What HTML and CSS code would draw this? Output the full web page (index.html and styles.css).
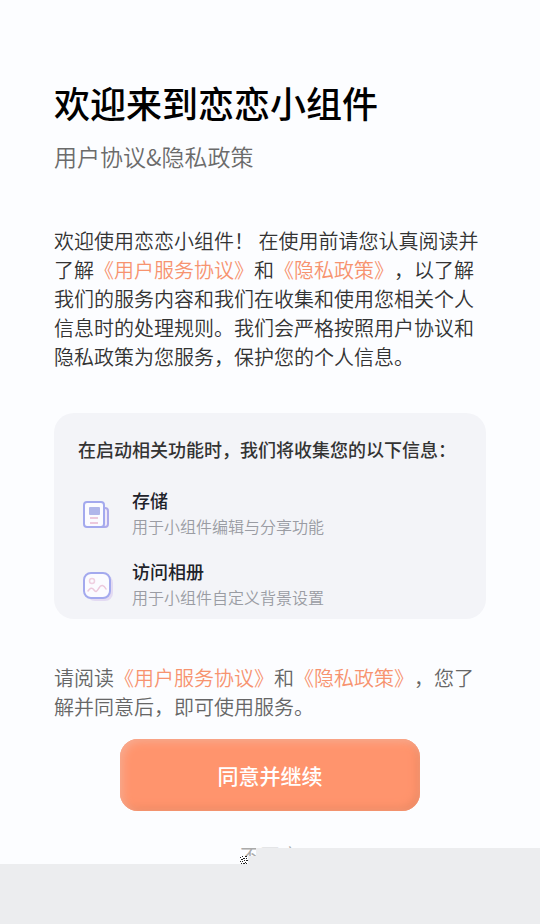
FILE: index.html
```html
<!DOCTYPE html>
<html lang="zh-CN">
<head>
<meta charset="utf-8">
<meta name="viewport" content="width=device-width, initial-scale=1">
<title>用户协议&amp;隐私政策</title>
<link rel="stylesheet" href="styles.css">
</head>
<body>
<main class="page">
  <h1 class="title">欢迎来到恋恋小组件</h1>
  <p class="subtitle">用户协议&amp;隐私政策</p>
  <p class="intro">欢迎使用恋恋小组件！ 在使用前请您认真阅读并了解<a class="link" href="#service">《用户服务协议》</a>和<a class="link" href="#privacy">《隐私政策》</a>，以了解我们的服务内容和我们在收集和使用您相关个人信息时的处理规则。我们会严格按照用户协议和隐私政策为您服务，保护您的个人信息。</p>
  <section class="card">
    <h2 class="card-title">在启动相关功能时，我们将收集您的以下信息：</h2>
    <ul class="list">
      <li class="item">
        <svg class="icon" viewBox="0 0 36 36" aria-hidden="true">
          <path d="M25 13h2a3 3 0 0 1 3 3v13a3 3 0 0 1-3 3h-5" fill="#f0e9f8" stroke="#aeaaea" stroke-width="2"/>
          <rect x="6" y="7" width="20" height="25" rx="3" fill="#fbfbff" stroke="#a3a9ee" stroke-width="2"/>
          <rect x="11" y="12" width="11" height="8" rx="1" fill="#b0b6ea"/>
          <path d="M12 23h8M12 28h8" stroke="#ecc8dc" stroke-width="2"/>
        </svg>
        <div class="item-text">
          <h3 class="item-title">存储</h3>
          <p class="item-desc">用于小组件编辑与分享功能</p>
        </div>
      </li>
      <li class="item">
        <svg class="icon" viewBox="0 0 36 36" aria-hidden="true">
          <rect x="9" y="9" width="26" height="26" rx="8" fill="#e3daf2"/>
          <rect x="6" y="7" width="26" height="25" rx="7" fill="#fbfbff" stroke="#a3a9ee" stroke-width="2"/>
          <circle cx="14" cy="15" r="2.500" fill="none" stroke="#efcfe0" stroke-width="1.500"/>
          <path d="M10 25c2-3 4-4 6-1s3 1 5-2c2-4 5-3 7 1" fill="none" stroke="#ecc8dc" stroke-width="1.500" stroke-linecap="round"/>
        </svg>
        <div class="item-text">
          <h3 class="item-title">访问相册</h3>
          <p class="item-desc">用于小组件自定义背景设置</p>
        </div>
      </li>
    </ul>
  </section>
  <p class="notice">请阅读<a class="link" href="#service">《用户服务协议》</a>和<a class="link" href="#privacy">《隐私政策》</a>，您了解并同意后，即可使用服务。</p>
  <button class="accept" type="button">同意并继续</button>
  <button class="decline" type="button">不同意</button>
</main>
<div class="cover" aria-hidden="true">
  <div class="cover-left"></div>
  <svg class="cover-edge" viewBox="0 0 16 76">
    <path d="M8 8h8v68H0V16h8z" fill="#ecedef"/>
    <path d="M0 8h8v8H0z" fill="#fff"/>
    <path d="M2 8h1v1H2zM5 8h2v1H5zM0 9h1v1H0zM3 10h2v1H3zM6 10h1v1H6zM1 11h2v1H1zM4 12h1v1H4zM6 12h2v1H6zM0 13h1v1H0zM2 13h1v1H2zM5 14h1v1H5zM1 15h1v1H1zM3 15h2v1H3zM6 15h1v1H6z" fill="#222"/>
  </svg>
  <div class="cover-right"></div>
</div>
</body>
</html>
```

FILE: styles.css
```css
* {
  box-sizing: border-box;
  margin: 0;
  padding: 0;
}

body {
  position: relative;
  min-height: 100vh;
  background: #fcfdff;
  color: #333;
  font-family: "Noto Sans CJK SC", sans-serif;
  font-weight: 350;
  text-spacing-trim: space-all;
}

.page {
  display: flex;
  flex-direction: column;
  padding: 76px 10% 0;
}

.title {
  color: #000;
  font-size: 36px;
  font-weight: 500;
  line-height: 52px;
}

.subtitle {
  margin-top: 12px;
  color: #6b6b6b;
  font-size: 23px;
  line-height: 32px;
}

.intro,
.notice {
  font-size: 20px;
  line-height: 29px;
}

.intro {
  margin-top: 54px;
}

.notice {
  margin-top: 44px;
  color: #666;
}

.link {
  color: #f7936f;
  text-decoration: none;
}

.card {
  margin-top: 42px;
  padding: 23px 24px 9px;
  border-radius: 20px;
  background: #f3f4f8;
}

.card-title {
  font-size: 18px;
  font-weight: 500;
  line-height: 26px;
}

.list {
  display: grid;
  gap: 19px;
  margin-top: 25px;
  list-style: none;
}

.item {
  display: flex;
  align-items: center;
  gap: 18px;
}

.icon {
  width: 36px;
  height: 36px;
}

.item-title {
  color: #20222a;
  font-size: 18px;
  font-weight: 500;
  line-height: 26px;
}

.item-desc {
  color: #9a9ca3;
  font-size: 16px;
  line-height: 26px;
}

.accept,
.decline {
  align-self: center;
  border: 0;
  font-family: inherit;
  cursor: pointer;
}

.accept {
  width: 300px;
  max-width: 100%;
  height: 72px;
  margin-top: 18px;
  border-radius: 18px;
  background: #ff946d;
  box-shadow: inset 3px 3px 9px #f8ab90, inset -3px -3px 8px #ec8862;
  color: #fff;
  font-size: 21px;
  font-weight: 500;
}

.decline {
  margin-top: 30px;
  background: none;
  color: #aaa;
  font-size: 20px;
  font-weight: inherit;
  line-height: 29px;
}

.cover {
  position: absolute;
  top: 848px;
  right: 0;
  bottom: 0;
  left: 0;
  display: flex;
}

.cover-left {
  flex: 240;
  margin-top: 16px;
  background: #ecedef;
}

.cover-edge {
  width: 16px;
  height: 76px;
}

.cover-right {
  flex: 284;
  background: #ecedef;
}
```
